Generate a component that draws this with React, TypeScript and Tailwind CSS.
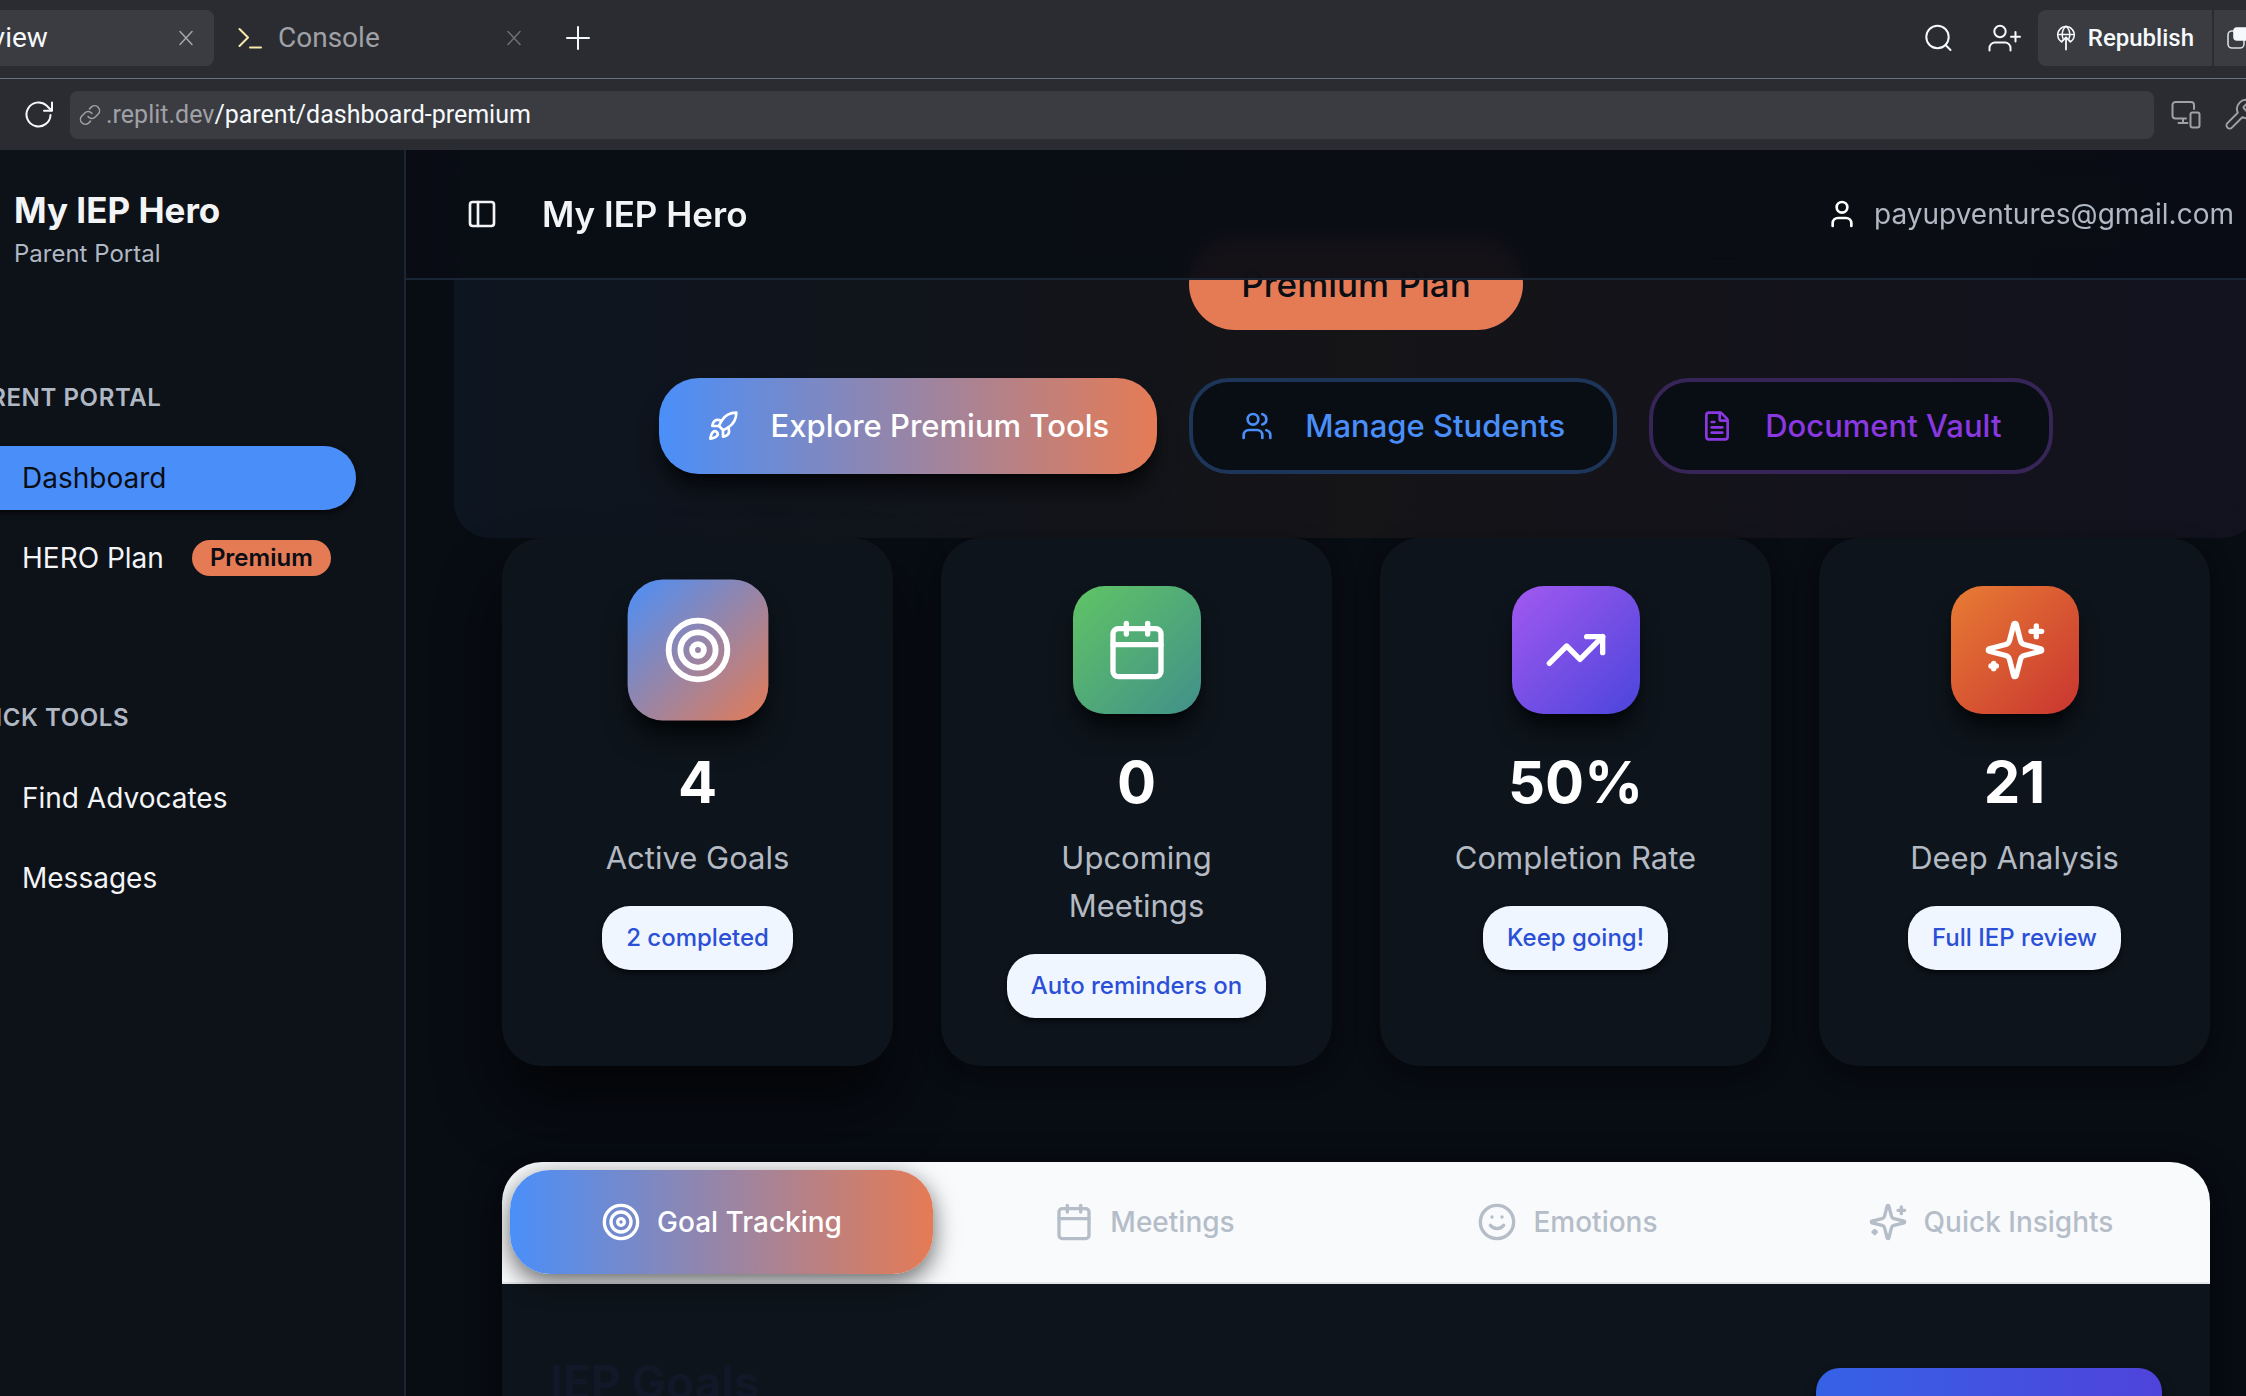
import type { ReactNode } from "react";
import {
  Calendar,
  FileText,
  PanelLeft,
  Rocket,
  Smile,
  Target,
  TrendingUp,
  User,
  Users,
} from "lucide-react";

type IconProps = { className?: string; strokeWidth?: number; viewBox?: string; children: ReactNode };

function LineIcon({ className, strokeWidth = 2, viewBox = "0 0 32 32", children }: IconProps) {
  return (
    <svg
      className={className}
      viewBox={viewBox}
      fill="none"
      stroke="currentColor"
      strokeWidth={strokeWidth}
      strokeLinecap="round"
      strokeLinejoin="round"
      aria-hidden="true"
    >
      {children}
    </svg>
  );
}

function CloseIcon({ className }: { className: string }) {
  return (
    <LineIcon className={className} viewBox="0 0 16 16" strokeWidth={1.5}>
      <path d="M2 1.500 14 14.500M14 1.500 2 14.500" />
    </LineIcon>
  );
}

function SparklesIcon({ className }: { className?: string }) {
  return (
    <LineIcon className={className} viewBox="0 0 24 24">
      <path d="M9.937 15.500A2 2 0 0 0 8.500 14.063l-6.135-1.582a.5.5 0 0 1 0-.962L8.500 9.936A2 2 0 0 0 9.937 8.500l1.582-6.135a.5.5 0 0 1 .963 0L14.063 8.500A2 2 0 0 0 15.500 9.937l6.135 1.581a.5.5 0 0 1 0 .964L15.500 14.063a2 2 0 0 0-1.437 1.437l-1.582 6.135a.5.5 0 0 1-.963 0z" />
      <path d="M20 3v4M22 5h-4M4 17v2M5 18H3" />
    </LineIcon>
  );
}

function TabBar() {
  return (
    <div className="flex h-[79px] shrink-0 items-start border-b border-[#6b7280] pt-[10px]">
      <div className="-ml-[86px] flex h-14 w-[300px] items-center justify-between rounded-lg bg-[#3b3c41] pl-9 pr-5">
        <button className="text-[28px] leading-8 text-[#f5f9fc]">Preview</button>
        <button aria-label="Close Preview">
          <CloseIcon className="size-4 text-[#a5a6ab]" />
        </button>
      </div>
      <div className="flex h-14 w-[332px] items-center pl-6 pr-6">
        <LineIcon className="size-6 text-[#f8eaa8]" viewBox="0 0 24 24">
          <path d="m1.500 3 8.500 8.500L1.500 20M12 21.500h11" />
        </LineIcon>
        <button className="ml-4 text-[28px] leading-8 text-[#a0a1a6]">Console</button>
        <button className="ml-auto" aria-label="Close Console">
          <CloseIcon className="size-4 text-[#6f7075]" />
        </button>
      </div>
      <button className="ml-4 flex h-14 items-center" aria-label="New tab">
        <LineIcon className="size-8 text-[#f5f9fc]">
          <path d="M16 5v22M5 16h22" />
        </LineIcon>
      </button>
      <div className="-mr-6 ml-auto flex h-14 items-center">
        <button aria-label="Search">
          <LineIcon className="size-8 text-[#f5f9fc]">
            <circle cx="15.500" cy="15" r="11.200" />
            <path d="m23.500 23 5 5" />
          </LineIcon>
        </button>
        <button className="ml-8" aria-label="Invite">
          <LineIcon className="h-8 w-9 text-[#f5f9fc]" viewBox="0 0 36 32">
            <circle cx="14" cy="9.500" r="5.700" />
            <path d="M3.500 28.500V26a5.500 5.500 0 0 1 5.500-5.500h10a5.500 5.500 0 0 1 5.500 5.500v2.500M29.500 10v9.500M25 14.800h9" />
          </LineIcon>
        </button>
        <button className="ml-4 flex h-14 items-center gap-3 rounded-l-lg bg-[#3b3c41] px-[18px] text-2xl font-medium leading-8 text-[#f5f9fc]">
          <LineIcon className="h-7 w-5" viewBox="0 0 20 28" strokeWidth={1.500}>
            <path d="M5.500 17.800a8.300 8.300 0 1 1 9 0" />
            <path d="M1.700 10.500h16.600M10 2.200c-2.600 2.200-3.800 5-3.800 8.300 0 1.500.3 2.800.8 4M10 2.200c2.600 2.200 3.800 5 3.800 8.300 0 1.500-.3 2.800-.8 4" />
            <path d="M10 25.500V14M5.800 17.500 10 13.300l4.200 4.200" strokeWidth={1.800} />
          </LineIcon>
          Republish
        </button>
        <button className="ml-[2px] flex h-14 w-14 items-center bg-[#3b3c41] pl-3" aria-label="Deployments">
          <LineIcon className="size-6" viewBox="0 0 24 24" strokeWidth={1.600}>
            <rect x="2" y="5" width="16" height="17" rx="4" stroke="#d9dce0" />
            <rect x="8" y="2" width="14" height="12" rx="3" fill="#f5f9fc" stroke="#f5f9fc" />
          </LineIcon>
        </button>
      </div>
    </div>
  );
}

function AddressBar() {
  return (
    <div className="flex h-[71px] shrink-0 items-center pl-6">
      <button aria-label="Reload">
        <LineIcon className="size-8 text-[#f5f9fc]">
          <path d="M26.500 16a12 12 0 1 1-4-9.500l5 5" />
          <path d="M28 3.500v8.300h-8" />
        </LineIcon>
      </button>
      <label className="ml-[14px] flex h-12 flex-1 items-center rounded-lg bg-[#3b3c41] pl-2 text-[25px] leading-8">
        <LineIcon className="mr-1 size-6 text-[#a0a1a6]" viewBox="0 0 24 24" strokeWidth={1.500}>
          <path d="M10 13.500a4.800 4.800 0 0 0 7.200.5l3.200-3.200a4.900 4.900 0 0 0-6.900-6.900l-2 2" />
          <path d="M14 10.500a4.800 4.800 0 0 0-7.200-.5l-3.200 3.200a4.900 4.900 0 0 0 6.900 6.900l2-2" />
        </LineIcon>
        <span className="text-[#a0a1a6]">.replit.dev</span>
        <input
          aria-label="Page path"
          className="min-w-0 flex-1 bg-transparent text-[#f5f9fc] outline-none"
          defaultValue="/parent/dashboard-premium"
        />
      </label>
      <div className="-mr-3 flex items-center gap-5 pl-4 text-[#a0a1a6]">
        <button aria-label="Device sizes">
          <LineIcon className="size-8">
            <path d="M16 19.500H5.500a3 3 0 0 1-3-3V6a3 3 0 0 1 3-3H21a3 3 0 0 1 3 3v4M13 19.500V24M8.500 24h9" />
            <rect x="20.500" y="13.500" width="9" height="15" rx="2" />
          </LineIcon>
        </button>
        <button aria-label="Developer tools">
          <LineIcon className="size-9" viewBox="0 0 24 24" strokeWidth={1.300}>
            <path d="M14.700 6.300a1 1 0 0 0 0 1.400l1.600 1.600a1 1 0 0 0 1.400 0l3.770-3.770a6 6 0 0 1-7.940 7.940l-6.910 6.910a2.120 2.120 0 0 1-3-3l6.910-6.910a6 6 0 0 1 7.940-7.940l-3.760 3.760z" />
          </LineIcon>
        </button>
      </div>
    </div>
  );
}

function SideLabel({ children }: { children: ReactNode }) {
  return (
    <h3 className="flex h-16 items-center px-4 text-2xl font-semibold uppercase tracking-wide text-[#b0b8c4]">
      {children}
    </h3>
  );
}

function SideLink({ children, active = false }: { children: ReactNode; active?: boolean }) {
  return (
    <a
      href="#"
      aria-current={active ? "page" : undefined}
      className={
        active
          ? "flex h-16 items-center rounded-full bg-[#4a8ff9] pl-20 text-[28px] text-[#0a0d14] shadow-md shadow-black/50"
          : "flex h-16 items-center pl-20 text-[28px] text-[#f3f4f6]"
      }
    >
      {children}
    </a>
  );
}

function Sidebar() {
  return (
    <aside className="-ml-[106px] w-[512px] shrink-0 border-r-2 border-[#1a2535] bg-[#0d1118] px-12 pt-10">
      <div className="pl-[72px]">
        <div className="text-[35px] font-bold leading-10 text-[#f3f4f6]">My IEP Hero</div>
        <div className="mt-2 text-2xl text-[#b0b8c4]">Parent Portal</div>
      </div>
      <nav className="mt-24 flex flex-col gap-24">
        <div className="flex flex-col gap-4">
          <SideLabel>Parent Portal</SideLabel>
          <SideLink active>Dashboard</SideLink>
          <SideLink>
            HERO Plan
            <span className="ml-7 flex h-9 items-center rounded-full bg-[#e57b55] px-[18px] text-2xl font-semibold text-[#0a0d14]">
              Premium
            </span>
          </SideLink>
        </div>
        <div className="flex flex-col gap-4">
          <SideLabel>Quick Tools</SideLabel>
          <SideLink>Find Advocates</SideLink>
          <SideLink>Messages</SideLink>
        </div>
      </nav>
    </aside>
  );
}

function Hero() {
  return (
    <section className="flex flex-col items-center gap-12 rounded-[36px] bg-linear-to-r/srgb from-[#0d1520] via-[#151417] to-[#12121f] px-12 pb-16 pt-28">
      <span className="flex h-[92px] items-center rounded-full bg-[#e57b55] px-[52px] text-[35px] font-medium text-[#0a0d14]">
        Premium Plan
      </span>
      <div className="flex gap-8">
        <button className="flex h-24 items-center gap-8 rounded-[40px] bg-linear-to-r/srgb from-[#4a8ff9] to-[#e57b55] px-12 text-[31px] font-medium text-white shadow-xl shadow-black/60">
          <Rocket className="size-8" />
          Explore Premium Tools
        </button>
        <button className="flex h-24 items-center gap-8 rounded-[40px] border-4 border-[#1d3558] bg-[#090d14] px-12 text-[31px] font-medium text-[#4a8ff9]">
          <Users className="size-8" />
          Manage Students
        </button>
        <button className="flex h-24 items-center gap-8 rounded-[40px] border-4 border-[#362556] bg-[#090d14] px-12 text-[31px] font-medium text-[#8a38e0]">
          <FileText className="size-8" />
          Document Vault
        </button>
      </div>
    </section>
  );
}

type IconType = (props: { className?: string }) => ReactNode;
type Stat = { icon: IconType; value: string; label: string; note: string; tile: string; card: string };

const stats: Stat[] = [
  {
    icon: (p) => <Target {...p} />,
    value: "4",
    label: "Active Goals",
    note: "2 completed",
    tile: "scale-110 from-[#4a8ff9] to-[#e57b55]",
    card: "shadow-[0_40px_60px_rgba(0,0,0,0.6)]",
  },
  {
    icon: (p) => <Calendar {...p} />,
    value: "0",
    label: "Upcoming Meetings",
    note: "Auto reminders on",
    tile: "from-[#60c465] to-[#41908a]",
    card: "shadow-[0_8px_24px_rgba(0,0,0,0.4)]",
  },
  {
    icon: (p) => <TrendingUp {...p} />,
    value: "50%",
    label: "Completion Rate",
    note: "Keep going!",
    tile: "from-[#a259f0] to-[#4b45db]",
    card: "shadow-[0_8px_24px_rgba(0,0,0,0.4)]",
  },
  {
    icon: SparklesIcon,
    value: "21",
    label: "Deep Analysis",
    note: "Full IEP review",
    tile: "from-[#e87c34] to-[#c93530]",
    card: "shadow-[0_8px_24px_rgba(0,0,0,0.4)]",
  },
];

function StatCard({ icon: Icon, value, label, note, tile, card }: Stat) {
  return (
    <article className={`flex flex-col items-center rounded-[40px] bg-[#0d141b] p-12 text-center ${card}`}>
      <div
        className={`mb-8 flex size-32 items-center justify-center rounded-[32px] bg-linear-to-br/srgb text-white shadow-xl shadow-black/60 ${tile}`}
      >
        <Icon className="size-16" />
      </div>
      <div className="mb-4 text-[58px] font-bold leading-[72px] text-white">{value}</div>
      <div className="mb-6 px-4 text-[31px] leading-[48px] text-[#b4bac4]">{label}</div>
      <span className="flex h-16 items-center whitespace-nowrap rounded-[28px] bg-[#eff6ff] px-6 text-2xl font-medium text-[#2b4fd6] shadow-md shadow-black/50">
        {note}
      </span>
    </article>
  );
}

const tabs: { icon: IconType; label: string }[] = [
  { icon: (p) => <Target {...p} />, label: "Goal Tracking" },
  { icon: (p) => <Calendar {...p} />, label: "Meetings" },
  { icon: (p) => <Smile {...p} />, label: "Emotions" },
  { icon: SparklesIcon, label: "Quick Insights" },
];

function GoalsPanel() {
  return (
    <section className="mx-12 mt-24 overflow-hidden rounded-[40px] bg-[#0d141b] shadow-[0_8px_32px_rgba(0,0,0,0.6)]">
      <div role="tablist" className="grid grid-cols-4 border-b-2 border-[#e5e7eb] bg-[#f9fafc] p-2">
        {tabs.map(({ icon: Icon, label }, i) => (
          <button
            key={label}
            role="tab"
            aria-selected={i === 0}
            className={
              i === 0
                ? "flex h-[104px] items-center justify-center gap-4 rounded-[40px] bg-linear-to-r/srgb from-[#4a8ff9] to-[#e57b55] text-[28px] font-medium text-white shadow-[0_8px_24px_rgba(0,0,0,0.6)]"
                : "flex h-[104px] items-center justify-center gap-4 rounded-[40px] text-[28px] font-medium text-[#b4bdc8]"
            }
          >
            <Icon className="size-10" />
            {label}
          </button>
        ))}
      </div>
      <div className="flex items-start justify-between px-12 pb-12 pt-[68px]">
        <h2 className="text-[46px] font-bold leading-[60px] text-[#111827]">IEP Goals</h2>
        <button className="mt-4 flex h-20 w-[346px] items-center justify-center rounded-3xl bg-linear-to-r/srgb from-[#3562e6] to-[#4f43da] text-[28px] font-medium text-white shadow-lg shadow-black/60">
          Add New Goal
        </button>
      </div>
    </section>
  );
}

export default function App() {
  return (
    <div className="flex h-screen flex-col overflow-hidden bg-[#2b2c31] font-['Inter',sans-serif]">
      <div className="font-['Roboto',sans-serif]">
        <TabBar />
        <AddressBar />
      </div>
      <div className="flex min-h-0 flex-1 overflow-hidden bg-[#080c13]">
        <Sidebar />
        <main className="-mr-[60px] flex min-w-0 flex-1 flex-col">
          <header className="z-10 flex h-[130px] shrink-0 items-center border-b-2 border-[#1a2535] bg-[#0a0d14]/95 pl-[60px] pr-[72px] backdrop-blur-md">
            <button aria-label="Toggle sidebar" className="text-[#f3f4f6]">
              <PanelLeft className="size-8" />
            </button>
            <h1 className="ml-11 text-[35px] font-semibold text-[#f3f4f6]">My IEP Hero</h1>
            <div className="ml-auto flex items-center gap-4 text-[28px] text-[#b0b8c4]">
              <User className="size-8 text-white" />
              payupventures@gmail.com
            </div>
          </header>
          <div className="-mt-[154px] px-12">
            <Hero />
            <div className="grid grid-cols-4 gap-12 px-12">
              {stats.map((s) => (
                <StatCard key={s.label} {...s} />
              ))}
            </div>
            <GoalsPanel />
          </div>
        </main>
      </div>
    </div>
  );
}
